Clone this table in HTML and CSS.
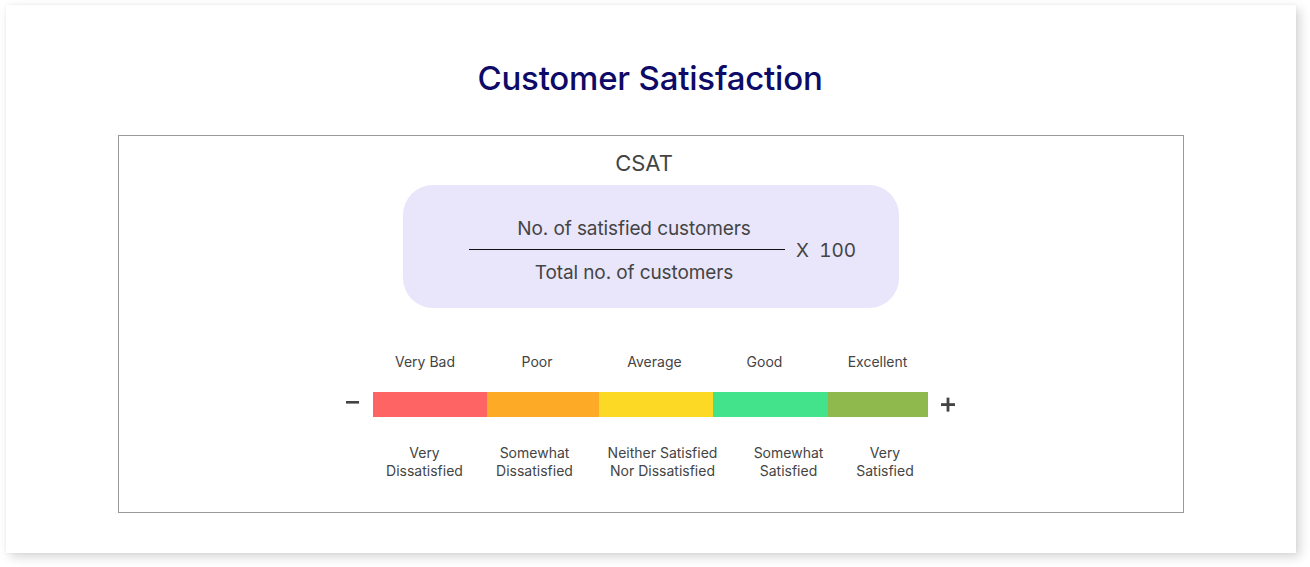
FILE: index.html
```html
<!DOCTYPE html>
<html lang="en">
<head>
<meta charset="utf-8">
<title>Customer Satisfaction</title>
<link rel="stylesheet" href="styles.css">
</head>
<body>
<div class="card">
  <h1 class="title">Customer Satisfaction</h1>
  <div class="panel">
    <div class="csat">CSAT</div>
    <div class="formula">
      <div class="fraction">
        <div class="num">No. of satisfied customers</div>
        <div class="rule"></div>
        <div class="den">Total no. of customers</div>
      </div>
      <div class="times">X&nbsp;&nbsp;100</div>
    </div>
    <div class="scale">
      <div class="labels top">
        <span>Very Bad</span>
        <span>Poor</span>
        <span>Average</span>
        <span>Good</span>
        <span>Excellent</span>
      </div>
      <div class="bar-row">
        <svg class="sign minus" width="13" height="25" viewBox="0 0 13 25"><rect x="0" y="9" width="13" height="2.6" fill="#444"/></svg>
        <div class="bar">
          <div class="seg s1"></div>
          <div class="seg s2"></div>
          <div class="seg s3"></div>
          <div class="seg s4"></div>
          <div class="seg s5"></div>
        </div>
        <svg class="sign plus" width="14" height="25" viewBox="0 0 14 25"><rect x="0" y="11.2" width="14" height="2.8" fill="#444"/><rect x="5.6" y="5.6" width="2.8" height="14" fill="#444"/></svg>
      </div>
      <div class="labels bottom">
        <span>Very<br>Dissatisfied</span>
        <span>Somewhat<br>Dissatisfied</span>
        <span>Neither Satisfied<br>Nor Dissatisfied</span>
        <span>Somewhat<br>Satisfied</span>
        <span>Very<br>Satisfied</span>
      </div>
    </div>
  </div>
</div>
</body>
</html>
```
FILE: styles.css
```css
html, body {
  margin: 0;
  padding: 0;
  background: #ffffff;
}
body {
  font-family: Inter, "Noto Sans", "Liberation Sans", sans-serif;
  color: #444444;
  padding: 5px 0 0 6px;
  height: 567px;
  box-sizing: border-box;
  overflow: hidden;
}
.card {
  width: 1290px;
  height: 548px;
  box-sizing: border-box;
  background: #ffffff;
  box-shadow: 4px 4px 10px rgba(0, 0, 0, 0.16), 0 0 3px rgba(0, 0, 0, 0.05);
  padding-top: 53px;
  display: flex;
  flex-direction: column;
  align-items: center;
}
.title {
  margin: 0;
  font-size: 33px;
  line-height: 40px;
  font-weight: 500;
  color: #0d0a68;
  letter-spacing: -0.2px;
  margin-left: -2px;
}
.panel {
  margin-top: 37px;
  width: 1066px;
  height: 378px;
  box-sizing: border-box;
  border: 1px solid #9a9a9a;
  padding-top: 14px;
  display: flex;
  flex-direction: column;
  align-items: center;
}
.csat {
  font-size: 22px;
  line-height: 27px;
  color: #444444;
  margin-left: -14px;
}
.formula {
  margin-top: 8px;
  width: 496px;
  height: 123px;
  box-sizing: border-box;
  background: #e9e6fb;
  border-radius: 30px;
  padding: 32px 0 0 66px;
  display: flex;
  align-items: flex-start;
}
.fraction {
  width: 316px;
  display: flex;
  flex-direction: column;
  align-items: center;
  font-size: 19px;
  line-height: 24px;
  color: #444444;
  letter-spacing: -0.1px;
}
.num,
.den {
  margin-left: 14px;
}
.rule {
  align-self: stretch;
  height: 1px;
  background: #111111;
  margin: 8px 0 11px;
}
.times {
  margin-left: 11px;
  margin-top: 22px;
  font-size: 19px;
  line-height: 24px;
  color: #444444;
  font-variant-numeric: tabular-nums;
}
.scale {
  margin-top: 45px;
  display: flex;
  flex-direction: column;
  align-items: center;
  margin-left: -1px;
}
.labels {
  width: 555px;
  display: grid;
  font-size: 14px;
  color: #444444;
  text-align: center;
  white-space: nowrap;
}
.labels.top {
  grid-template-columns: 104px 120px 115px 105px 121px;
  line-height: 17px;
}
.labels.bottom {
  grid-template-columns: 103px 117px 139px 113px 80px;
  line-height: 18px;
  margin-top: 27px;
}
.bar-row {
  margin-top: 22px;
  display: flex;
  align-items: flex-start;
}
.sign {
  display: block;
}
.minus {
  margin-right: 14px;
}
.plus {
  margin-left: 13px;
}
.bar {
  width: 555px;
  height: 25px;
  display: grid;
  grid-template-columns: 114px 112px 114px 115px 100px;
}
.s1 { background: #ff6464; }
.s2 { background: #fdaa27; }
.s3 { background: #fbd925; }
.s4 { background: #42e38b; }
.s5 { background: #8fb84d; }
```
